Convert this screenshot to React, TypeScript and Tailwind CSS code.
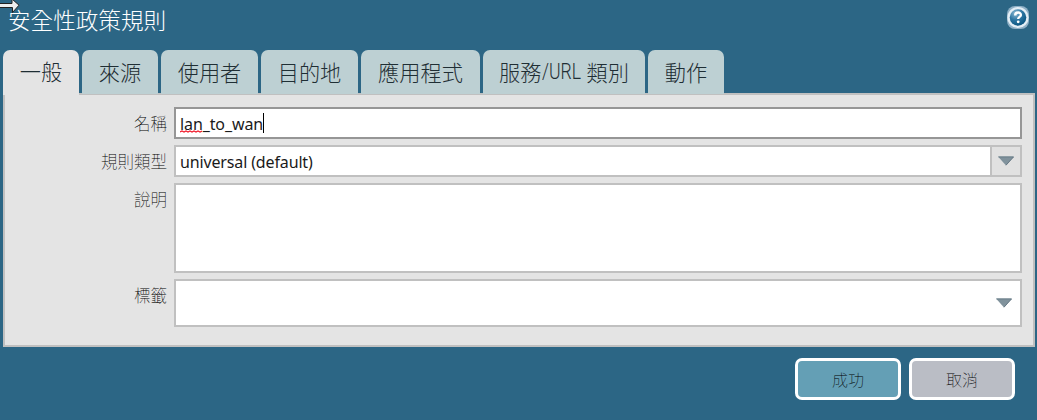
import { useState } from "react";

const tabs = [
  { label: "一般", width: "w-[76px]" },
  { label: "來源", width: "w-[76px]" },
  { label: "使用者", width: "w-[97px]" },
  { label: "目的地", width: "w-[97px]" },
  { label: "應用程式", width: "w-[119px]" },
  { label: "服務/URL 類別", width: "w-[162px]" },
  { label: "動作", width: "w-[76px]" },
];

const cjk = "font-['Noto_Sans_CJK_TC',sans-serif]";

const TabLabel = ({ label }: { label: string }) => {
  if (!label.includes("/URL")) return <>{label}</>;
  const [before, after] = label.split("/URL ");
  return (
    <span className="flex items-center">
      {before}
      <span className="inline-block w-[45px] font-['Roboto',sans-serif] font-light text-[22px]">
        <span className="inline-block origin-left scale-x-[0.8]">/URL</span>
      </span>
      {after}
    </span>
  );
};

const Arrow = () => (
  <svg width="16" height="10" viewBox="0 0 16 10">
    <defs>
      <linearGradient id="arrow" x1="0" y1="0" x2="1" y2="1">
        <stop offset="0" stopColor="#7d909a" />
        <stop offset="1" stopColor="#85959f" />
      </linearGradient>
    </defs>
    <path d="M0 .5h16L8 9.5z" fill="url(#arrow)" />
    <path d="M.5 1h15" stroke="#6d808b" />
    <path d="M15.5 1L8 9.2" stroke="#596c78" strokeWidth=".8" />
  </svg>
);

const Help = () => (
  <svg width="22" height="23" viewBox="0 0 22 23">
    <defs>
      <radialGradient id="help" cx=".35" cy=".25" r=".8">
        <stop offset="0" stopColor="#8bb9d3" />
        <stop offset=".5" stopColor="#2d76a3" />
        <stop offset="1" stopColor="#07527d" />
      </radialGradient>
    </defs>
    <rect width="22" height="23" rx="8" fill="#8fb0c6" />
    <circle cx="11" cy="11.5" r="10.6" fill="#e3eef6" />
    <circle cx="11" cy="11.5" r="8.3" fill="url(#help)" />
    <path
      d="M8.2 9.4c0-3.7 5.7-3.7 5.7-.5 0 2-2.7 2-2.7 4"
      fill="none"
      stroke="#fff"
      strokeWidth="2.4"
    />
    <circle cx="11.2" cy="15.8" r="1.4" fill="#fff" />
  </svg>
);

const Label = ({ children }: { children: string }) => (
  <div
    className={`${cjk} w-[162px] shrink-0 pt-1 text-right text-[16.5px] leading-6 font-thin text-black`}
  >
    {children}
  </div>
);

const App = () => {
  const [active, setActive] = useState(0);

  return (
    <div className="relative flex h-[420px] w-[1037px] flex-col overflow-hidden bg-[#2c6685]">
      <div className="flex h-[50px] shrink-0 justify-between">
        <h1
          className={`${cjk} pt-[5px] pl-2 text-[22.6px] leading-[30px] font-light text-white`}
        >
          安全性政策規則
        </h1>
        <div className="pt-1.5 pr-2">
          <Help />
        </div>
      </div>

      <div className="relative z-10 -mb-px flex h-11 shrink-0 gap-[3px] pl-[3px]">
        {tabs.map((tab, i) => (
          <button
            key={tab.label}
            onClick={() => setActive(i)}
            className={`${cjk} ${tab.width} flex items-center justify-center rounded-t-[7px] text-[21.2px] font-light whitespace-nowrap text-[#1f2e34] ${
              i === active
                ? "h-[45px] bg-[#e4e4e4] pb-[3px]"
                : "h-11 bg-[#bdd0d3] pb-px"
            }`}
          >
            <TabLabel label={tab.label} />
          </button>
        ))}
      </div>

      <div className="mr-0.5 ml-[3px] flex h-[254px] shrink-0 flex-col gap-1.5 border-2 border-[#c0c0c0] bg-[#e4e4e4] pt-3 pr-[11px] font-['Noto_Sans',sans-serif] text-base text-[#1a1a1a]">
        <div className="flex">
          <Label>名稱</Label>
          <div className="ml-[7px] flex h-8 flex-1 items-center border-2 border-[#969696] bg-white pl-1">
            <span className="relative pt-0.5 tracking-[-0.1px]">
              lan_to_wan
              {/* spell check squiggle */}
              <svg
                className="absolute top-5 left-0"
                width="22"
                height="3"
                viewBox="0 0 22 3"
              >
                <path
                  d="M0 2l2-1 2 1 2-1 2 1 2-1 2 1 2-1 2 1 2-1 2 1 2-1"
                  fill="none"
                  stroke="#f01c2c"
                  strokeWidth="1.2"
                />
              </svg>
            </span>
            <span className="h-5 w-px bg-black" />
          </div>
        </div>
        <div className="flex">
          <Label>規則類型</Label>
          <div className="ml-[7px] flex h-8 flex-1 border-2 border-[#c0c0c0] bg-white">
            <span className="flex flex-1 items-center pt-0.5 pl-1 tracking-[-0.14px]">
              universal (default)
            </span>
            <button className="flex w-[30px] items-center justify-center border-l-2 border-[#c0c0c0] bg-[#e1e1e1]">
              <Arrow />
            </button>
          </div>
        </div>
        <div className="flex">
          <Label>說明</Label>
          <div className="ml-[7px] h-[90px] flex-1 border-2 border-[#c0c0c0] bg-white" />
        </div>
        <div className="flex">
          <Label>標籤</Label>
          <div className="ml-[7px] flex h-12 flex-1 items-center justify-end border-2 border-[#c0c0c0] bg-white pr-2">
            <Arrow />
          </div>
        </div>
      </div>

      <div className="flex justify-end gap-2 pt-[11px] pr-[22px]">
        <button
          className={`${cjk} h-[42px] w-[106px] rounded-[7px] border-[3px] border-white bg-[#649fb5] text-base font-thin text-black`}
        >
          成功
        </button>
        <button
          className={`${cjk} h-[42px] w-[106px] rounded-[7px] border-[3px] border-white bg-[#babdc5] text-base font-thin text-black`}
        >
          取消
        </button>
      </div>

      {/* mouse cursor */}
      <svg
        className="absolute top-0 left-0"
        width="20"
        height="13"
        viewBox="0 0 20 13"
      >
        <path
          d="M-1 3.5H12V-1L19 5.2 12.5 12.5V7.5H-1z"
          fill="#eee"
          stroke="#222"
        />
      </svg>
    </div>
  );
};

export default App;
